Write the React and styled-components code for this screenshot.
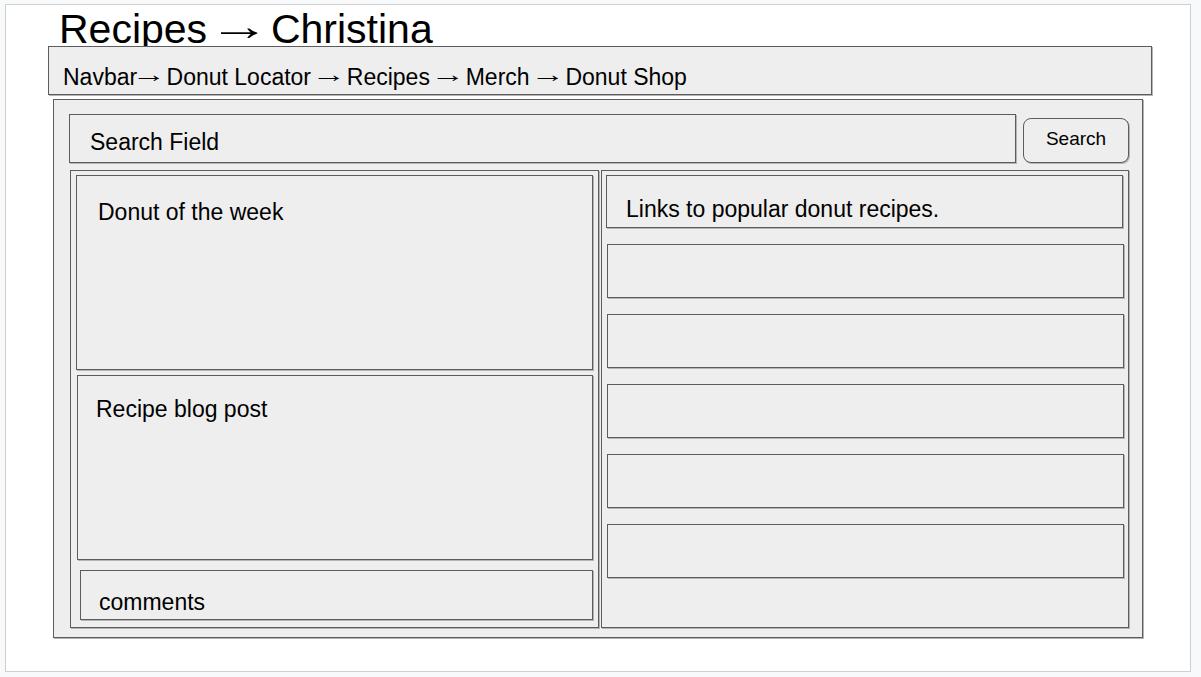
import React from "react";
import styled, { createGlobalStyle } from "styled-components";

const Global = createGlobalStyle`
  html, body { margin: 0; padding: 0; background: #f8f9fb; }
  body { font-family: "Liberation Sans", Arial, sans-serif; color: #000; }
  * { box-sizing: border-box; }
`;

const Card = styled.div`
  margin: 4px 0 0 5px;
  width: 1186px;
  height: 668px;
  background: #fff;
  border: 1px solid #cfcfcf;
  padding: 4px 0 0 42px;
`;

const Title = styled.h1`
  margin: 0 0 -4px 11px;
  font-weight: 400;
  font-size: 41px;
  line-height: 41px;
  height: 41px;
  white-space: nowrap;
`;

const Arrow = styled.span`
  display: inline-block;
  transform: translateY(${(p) => p.$lift}em) scaleX(${(p) => p.$stretch});
`;

const Box = styled.div`
  position: relative;
  background: #eeeeee;
  border: 1px solid #5c5c5c;
  box-shadow: 1px 1px 0 #b4b4b4;
`;

const Navbar = styled(Box)`
  width: 1104px;
  height: 49px;
  padding: 17px 0 0 14px;
  font-size: 23px;
  line-height: 26px;
  white-space: nowrap;
`;

const Main = styled(Box)`
  margin: 4px 0 0 5px;
  width: 1090px;
  height: 539px;
  padding: 14px 13px 9px 15px;
  display: flex;
  flex-direction: column;
  gap: 7px;
`;

const SearchRow = styled.div`
  display: flex;
  align-items: flex-end;
  gap: 7px;
`;

const SearchField = styled(Box)`
  width: 947px;
  height: 49px;
  padding: 14px 0 0 20px;
  font-size: 23px;
  line-height: 26px;
`;

const SearchButton = styled.button`
  width: 106px;
  height: 45px;
  background: #eeeeee;
  border: 1px solid #5c5c5c;
  border-radius: 8px;
  box-shadow: 1px 1px 0 #b4b4b4;
  font-family: "Liberation Sans", Arial, sans-serif;
  font-size: 19px;
  color: #000;
  padding: 0 0 4px 0;
`;

const Columns = styled.div`
  flex: 1;
  display: grid;
  grid-template-columns: 529px 528px;
  gap: 2px;
  margin-left: 1px;
`;

const Column = styled(Box)`
  display: flex;
  flex-direction: column;
  gap: ${(p) => p.$gap}px;
  padding: ${(p) => p.$pad};
`;

const Panel = styled(Box)`
  margin-left: ${(p) => p.$inset || 0}px;
  margin-top: ${(p) => p.$push || 0}px;
  width: ${(p) => p.$w}px;
  height: ${(p) => p.$h}px;
  padding: ${(p) => p.$top || 0}px 0 0 ${(p) => p.$left || 0}px;
  font-size: 23px;
  line-height: 26px;
  white-space: nowrap;
`;

const links = [0, 1, 2, 3, 4];
const navItems = ["Donut Locator", "Recipes", "Merch", "Donut Shop"];

export default function App() {
  return (
    <>
      <Global />
      <Card>
        <Title>
          Recipes <Arrow $lift={-0.08} $stretch={1.5}>→</Arrow> Christina
        </Title>
        <Navbar>
          Navbar
          {navItems.map((item, i) => (
            <React.Fragment key={item}>
              {i > 0 ? " " : ""}
              <Arrow $lift={-0.13} $stretch={1.5}>→</Arrow> {item}
            </React.Fragment>
          ))}
        </Navbar>
        <Main>
          <SearchRow>
            <SearchField>Search Field</SearchField>
            <SearchButton>Search</SearchButton>
          </SearchRow>
          <Columns>
            <Column $gap={5} $pad="4px 0 0 5px">
              <Panel $w={517} $h={195} $top={23} $left={21}>
                Donut of the week
              </Panel>
              <Panel $inset={1} $w={516} $h={185} $top={20} $left={18}>
                Recipe blog post
              </Panel>
              <Panel $inset={4} $push={5} $w={513} $h={50} $top={18} $left={18}>
                comments
              </Panel>
            </Column>
            <Column $gap={16} $pad="4px 0 0 4px">
              <Panel $w={517} $h={53} $top={20} $left={19}>
                Links to popular donut recipes.
              </Panel>
              {links.map((i) => (
                <Panel key={i} $inset={1} $w={517} $h={54} />
              ))}
            </Column>
          </Columns>
        </Main>
      </Card>
    </>
  );
}
